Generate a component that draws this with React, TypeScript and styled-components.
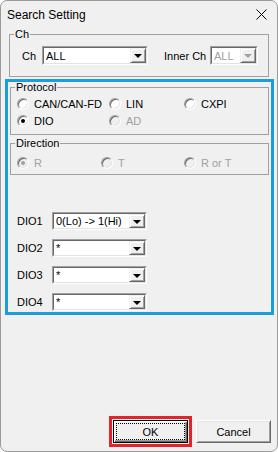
import React from 'react';
import styled, { createGlobalStyle } from 'styled-components';

const GlobalStyle = createGlobalStyle`
	html, body {
		margin: 0;
		padding: 0;
		background: #ffffff;
	}
	body {
		font-family: "Liberation Sans", Arial, sans-serif;
		font-size: 11px;
		color: #000;
	}
`;

const Window = styled.div`
	box-sizing: border-box;
	width: 278px;
	height: 452px;
	display: flex;
	flex-direction: column;
	background: #f0f0f0;
	border: 1px solid #9a9a9a;
	border-radius: 7px;
	overflow: hidden;
`;

const TitleBar = styled.div`
	height: 27px;
	display: flex;
	align-items: center;
	justify-content: space-between;
	padding: 0 10px 0 6px;
	font-size: 12px;
	svg {
		display: block;
	}
`;

const GroupBox = styled.fieldset<{ $pt: number; $pb: number; $mt?: number }>`
	margin: ${p => p.$mt || 0}px 0 0;
	padding: ${p => p.$pt}px 0 ${p => p.$pb}px;
	min-width: 0;
	border: 1px solid #a0a0a0;
`;

const Legend = styled.legend`
	margin-left: 4px;
	padding: 0 1px;
	line-height: 13px;
	font-size: 11px;
`;

const ChGroup = styled(GroupBox)`
	margin: 0 8px;
`;

const ChRow = styled.div`
	display: flex;
	align-items: center;
	padding-left: 12px;
`;

const FieldLabel = styled.span<{ $w: number; $ml?: number }>`
	width: ${p => p.$w}px;
	margin-left: ${p => p.$ml || 0}px;
	flex: none;
`;

const Combo = styled.div<{ $w: number; $h: number }>`
	box-sizing: border-box;
	width: ${p => p.$w}px;
	height: ${p => p.$h}px;
	flex: none;
	display: flex;
	border: 1px solid;
	border-color: #a0a0a0 #ffffff #ffffff #a0a0a0;
`;

const ComboField = styled.div<{ $disabled?: boolean }>`
	flex: 1;
	display: flex;
	border: 1px solid;
	border-color: #696969 #e3e3e3 #e3e3e3 #696969;
	background: #fff;
	color: ${p => (p.$disabled ? '#a0a0a0' : '#000')};
`;

const ComboText = styled.span`
	flex: 1;
	padding-left: 2px;
	display: flex;
	align-items: center;
	white-space: nowrap;
	overflow: hidden;
`;

const DropButton = styled.div<{ $disabled?: boolean }>`
	box-sizing: border-box;
	width: 16px;
	flex: none;
	display: flex;
	align-items: center;
	justify-content: center;
	background: #f0f0f0;
	border: 1px solid;
	border-color: #f0f0f0 #696969 #696969 #f0f0f0;
	box-shadow: inset 1px 1px 0 #fff, inset -1px -1px 0 #a0a0a0;
	&::after {
		content: '';
		border-left: 4px solid transparent;
		border-right: 4px solid transparent;
		border-top: 4px solid ${p => (p.$disabled ? '#a0a0a0' : '#000')};
		margin-top: 1px;
	}
`;

const Highlight = styled.div`
	margin: 2px 3px 0 4px;
	border: 3px solid #1a9fd9;
	padding: 0 2px 1px;
`;

const RadioGrid = styled.div<{ $cols: string }>`
	display: grid;
	grid-template-columns: ${p => p.$cols};
	grid-auto-rows: 17px;
	padding-left: 6px;
`;

const RadioItem = styled.label<{ $disabled?: boolean }>`
	display: flex;
	align-items: center;
	gap: 5px;
	color: ${p => (p.$disabled ? '#a0a0a0' : '#000')};
	white-space: nowrap;
`;

const RadioMark = styled.span<{ $checked?: boolean; $disabled?: boolean }>`
	box-sizing: border-box;
	width: 12px;
	height: 12px;
	flex: none;
	border-radius: 50%;
	border: 1px solid;
	border-color: #a0a0a0 #ffffff #ffffff #a0a0a0;
	box-shadow: inset 1px 1px 0 #696969, inset -1px -1px 0 #e3e3e3;
	background: ${p => (p.$disabled ? '#f0f0f0' : '#fff')};
	display: flex;
	align-items: center;
	justify-content: center;
	&::after {
		content: '';
		display: ${p => (p.$checked ? 'block' : 'none')};
		width: 4px;
		height: 4px;
		border-radius: 50%;
		background: ${p => (p.$disabled ? '#a0a0a0' : '#000')};
	}
`;

const DioList = styled.div`
	display: flex;
	flex-direction: column;
	gap: 9px;
	margin-top: 37px;
	padding-left: 7px;
`;

const DioRow = styled.div`
	display: flex;
	align-items: center;
`;

const Spacer = styled.div`
	flex: 1;
`;

const ButtonBar = styled.div`
	display: flex;
	align-items: center;
	justify-content: flex-end;
	gap: 4px;
	padding: 0 6px 4px 0;
`;

const FocusFrame = styled.div`
	border: 3px solid #e2232a;
	padding: 1px;
`;

const PushButton = styled.button<{ $default?: boolean }>`
	box-sizing: border-box;
	width: 75px;
	height: 23px;
	padding: 0;
	font: inherit;
	font-size: 11px;
	color: #000;
	background: #f0f0f0;
	border: 1px solid;
	border-color: ${p => (p.$default ? '#000 #000 #000 #000' : '#fff #696969 #696969 #fff')};
	box-shadow: ${p =>
		p.$default
			? 'inset 1px 1px 0 #fff, inset -1px -1px 0 #696969, inset -2px -2px 0 #a0a0a0'
			: 'inset 1px 1px 0 #e3e3e3, inset -1px -1px 0 #a0a0a0'};
	display: flex;
	align-items: center;
	justify-content: center;
	position: relative;
	span {
		flex: 1;
		align-self: stretch;
		display: flex;
		align-items: center;
		justify-content: center;
		margin: ${p => (p.$default ? '3px' : '0')};
		outline: ${p => (p.$default ? '1px dotted #000' : 'none')};
	}
`;

const CloseIcon = () => (
	<svg width="11" height="11" viewBox="0 0 11 11">
		<path d="M0.5 0.5 L10.5 10.5 M10.5 0.5 L0.5 10.5" stroke="#000" strokeWidth="1" fill="none" />
	</svg>
);

type ComboProps = { value: string; width: number; height: number; disabled?: boolean };

const ComboBox = ({ value, width, height, disabled }: ComboProps) => (
	<Combo $w={width} $h={height}>
		<ComboField $disabled={disabled}>
			<ComboText>{value}</ComboText>
			<DropButton $disabled={disabled} />
		</ComboField>
	</Combo>
);

type RadioProps = { label: string; checked?: boolean; disabled?: boolean };

const Radio = ({ label, checked, disabled }: RadioProps) => (
	<RadioItem $disabled={disabled}>
		<RadioMark $checked={checked} $disabled={disabled} />
		{label}
	</RadioItem>
);

const dioRows = [
	{ name: 'DIO1', value: '0(Lo) -> 1(Hi)' },
	{ name: 'DIO2', value: '*' },
	{ name: 'DIO3', value: '*' },
	{ name: 'DIO4', value: '*' },
];

const App = () => {
	return (
		<>
			<GlobalStyle />
			<Window>
				<TitleBar>
					<span>Search Setting</span>
					<CloseIcon />
				</TitleBar>
				<ChGroup $pt={5} $pb={11}>
					<Legend>Ch</Legend>
					<ChRow>
						<FieldLabel $w={20}>Ch</FieldLabel>
						<ComboBox value="ALL" width={106} height={19} />
						<FieldLabel $w={46} $ml={16}>Inner Ch</FieldLabel>
						<ComboBox value="ALL" width={48} height={19} disabled />
					</ChRow>
				</ChGroup>
				<Highlight>
					<GroupBox $pt={1} $pb={5} $mt={-1}>
						<Legend>Protocol</Legend>
						<RadioGrid $cols="92px 75px 1fr">
							<Radio label="CAN/CAN-FD" />
							<Radio label="LIN" />
							<Radio label="CXPI" />
							<Radio label="DIO" checked />
							<Radio label="AD" disabled />
						</RadioGrid>
					</GroupBox>
					<GroupBox $pt={4} $pb={3} $mt={2}>
						<Legend>Direction</Legend>
						<RadioGrid $cols="84px 83px 1fr">
							<Radio label="R" checked disabled />
							<Radio label="T" disabled />
							<Radio label="R or T" disabled />
						</RadioGrid>
					</GroupBox>
					<DioList>
						{dioRows.map(row => (
							<DioRow key={row.name}>
								<FieldLabel $w={35}>{row.name}</FieldLabel>
								<ComboBox value={row.value} width={95} height={18} />
							</DioRow>
						))}
					</DioList>
				</Highlight>
				<Spacer />
				<ButtonBar>
					<FocusFrame>
						<PushButton $default>
							<span>OK</span>
						</PushButton>
					</FocusFrame>
					<PushButton>
						<span>Cancel</span>
					</PushButton>
				</ButtonBar>
			</Window>
		</>
	);
};

export default App;
